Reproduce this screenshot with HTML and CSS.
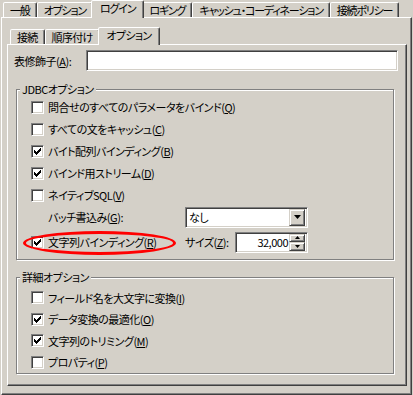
FILE: index.html
```html
<!DOCTYPE html>
<html lang="ja">
<head>
  <meta charset="UTF-8">
  <title>ログイン オプション</title>
  <link rel="stylesheet" href="styles.css">
</head>
<body>
  <div class="dialog">
    <div class="tabs outer-tabs">
      <div class="tab">一般</div>
      <div class="tab">オプション</div>
      <div class="tab active">ログイン</div>
      <div class="tab">ロギング</div>
      <div class="tab">キャッシュ・コーディネーション</div>
      <div class="tab">接続ポリシー</div>
    </div>
    <div class="panel outer-panel">
      <div class="tabs inner-tabs">
        <div class="tab">接続</div>
        <div class="tab">順序付け</div>
        <div class="tab active">オプション</div>
      </div>
      <div class="panel inner-panel">
        <div class="field-row">
          <span class="field-label">表修飾子(<u>A</u>):</span>
          <div class="textbox"></div>
        </div>

        <fieldset class="group group-jdbc">
          <legend>JDBCオプション</legend>
          <div class="check-row"><span class="check"></span>問合せのすべてのパラメータをバインド(<u>Q</u>)</div>
          <div class="check-row"><span class="check"></span>すべての文をキャッシュ(<u>C</u>)</div>
          <div class="check-row"><span class="check"><svg width="7" height="7" viewBox="0 0 7 7"><path d="M0 2h1v3H0zM1 3h1v3H1zM2 4h1v3H2zM3 3h1v3H3zM4 2h1v3H4zM5 1h1v3H5zM6 0h1v3H6z"/></svg></span>バイト配列バインディング(<u>B</u>)</div>
          <div class="check-row"><span class="check"><svg width="7" height="7" viewBox="0 0 7 7"><path d="M0 2h1v3H0zM1 3h1v3H1zM2 4h1v3H2zM3 3h1v3H3zM4 2h1v3H4zM5 1h1v3H5zM6 0h1v3H6z"/></svg></span>バインド用ストリーム(<u>D</u>)</div>
          <div class="check-row"><span class="check"></span>ネイティブSQL(<u>V</u>)</div>

          <div class="batch-row">
            <span class="batch-label">バッチ書込み(<u>G</u>):</span>
            <div class="combo">
              <span class="combo-text">なし</span>
              <span class="btn combo-btn"><svg width="7" height="4" viewBox="0 0 7 4"><path d="M0 0h7L3.5 4z"/></svg></span>
            </div>
          </div>

          <div class="string-row">
            <div class="check-row string-check">
              <span class="check"><svg width="7" height="7" viewBox="0 0 7 7"><path d="M0 2h1v3H0zM1 3h1v3H1zM2 4h1v3H2zM3 3h1v3H3zM4 2h1v3H4zM5 1h1v3H5zM6 0h1v3H6z"/></svg></span>文字列バインディング(<u>R</u>)
              <span class="mark"></span>
            </div>
            <span class="size-label">サイズ(<u>Z</u>):</span>
            <div class="spinner">
              <span class="spin-text">32,000</span>
              <span class="spin-btns">
                <span class="btn spin-btn"><svg width="5" height="3" viewBox="0 0 5 3"><path d="M2.5 0L5 3H0z"/></svg></span>
                <span class="btn spin-btn"><svg width="5" height="3" viewBox="0 0 5 3"><path d="M0 0h5L2.5 3z"/></svg></span>
              </span>
            </div>
          </div>
        </fieldset>

        <fieldset class="group group-detail">
          <legend>詳細オプション</legend>
          <div class="check-row"><span class="check"></span>フィールド名を大文字に変換(<u>I</u>)</div>
          <div class="check-row"><span class="check"><svg width="7" height="7" viewBox="0 0 7 7"><path d="M0 2h1v3H0zM1 3h1v3H1zM2 4h1v3H2zM3 3h1v3H3zM4 2h1v3H4zM5 1h1v3H5zM6 0h1v3H6z"/></svg></span>データ変換の最適化(<u>O</u>)</div>
          <div class="check-row"><span class="check"><svg width="7" height="7" viewBox="0 0 7 7"><path d="M0 2h1v3H0zM1 3h1v3H1zM2 4h1v3H2zM3 3h1v3H3zM4 2h1v3H4zM5 1h1v3H5zM6 0h1v3H6z"/></svg></span>文字列のトリミング(<u>M</u>)</div>
          <div class="check-row"><span class="check"></span>プロパティ(<u>P</u>)</div>
        </fieldset>
      </div>
    </div>
  </div>
</body>
</html>
```

FILE: styles.css
```css
body {
  margin: 0;
  background: #d4d0c8;
  font-family: "Noto Sans CJK JP", "Liberation Sans", sans-serif;
  font-size: 11px;
  font-feature-settings: "palt";
  letter-spacing: -0.5px;
  color: #000;
  overflow: hidden;
}
u {
  text-underline-offset: 1px;
}
.dialog {
  width: 411px;
  padding-left: 1px;
}

/* Tab strips */
.tabs {
  display: flex;
  align-items: flex-end;
  height: 17px;
  padding-left: 2px;
  position: relative;
  z-index: 1;
}
.tab {
  height: 15px;
  line-height: 14px;
  padding: 0 6px;
  border: 1px solid;
  border-bottom: none;
  border-color: #fff #404040 transparent #fff;
  border-radius: 2px 2px 0 0;
  box-shadow: inset -1px 0 #808080;
  background: #d4d0c8;
  white-space: nowrap;
  box-sizing: border-box;
  letter-spacing: -0.7px;
}
.outer-tabs .tab {
  letter-spacing: -1.2px;
}
.tab.active {
  height: 18px;
  line-height: 15px;
  margin: 0 -2px -1px;
  padding: 0 8px;
  position: relative;
  z-index: 2;
}

/* Panels */
.panel {
  border: 1px solid;
  border-color: #fff #404040 #404040 #fff;
  box-shadow: inset -1px -1px #808080;
  box-sizing: border-box;
}
.outer-panel {
  height: 378px;
  padding: 9px 4px 7px 5px;
}
.inner-tabs {
  padding-left: 3px;
}
.inner-panel {
  height: 342px;
  padding: 5px 0 0 0;
}

/* Sunken field */
.textbox,
.combo,
.spinner {
  border: 1px solid;
  border-color: #808080 #fff #fff #808080;
  box-shadow: inset 1px 1px #404040, inset -1px -1px #d4d0c8;
  background: #fff;
  box-sizing: border-box;
}
.field-row {
  display: flex;
  align-items: center;
  height: 21px;
  padding-left: 6px;
}
.field-label {
  width: 72px;
}
.textbox {
  width: 312px;
  height: 21px;
}

/* Group boxes */
.group {
  width: 378px;
  margin: 11px 0 0 8px;
  padding: 0 0 5px 14px;
  border: 1px solid #808080;
  box-shadow: inset 1px 1px #fff, 1px 1px #fff;
  box-sizing: border-box;
  min-width: 0;
}
.group legend {
  margin-left: -11px;
  padding: 0 2px;
  line-height: 14px;
  background: #d4d0c8;
}
.group-detail {
  margin-top: 10px;
  padding-top: 3px;
  padding-bottom: 0;
}
.check-row {
  display: flex;
  align-items: center;
  height: 22px;
  white-space: nowrap;
}
.group-detail .check-row {
  height: 21.5px;
}
.check {
  width: 13px;
  height: 13px;
  margin-right: 4px;
  border: 1px solid;
  border-color: #808080 #fff #fff #808080;
  box-shadow: inset 1px 1px #404040, inset -1px -1px #d4d0c8;
  background: #fff;
  box-sizing: border-box;
  display: flex;
  align-items: center;
  justify-content: center;
  flex-shrink: 0;
}
.check svg {
  display: block;
}

/* Batch write combo */
.batch-row {
  display: flex;
  align-items: center;
  height: 22px;
}
.batch-label {
  width: 154px;
  padding-left: 17px;
  box-sizing: border-box;
}
.combo {
  width: 123px;
  height: 21px;
  display: flex;
  align-items: center;
  justify-content: space-between;
  padding: 2px;
}
.combo-text {
  padding-left: 1px;
}
.btn {
  background: #d4d0c8;
  border: 1px solid;
  border-color: #d4d0c8 #404040 #404040 #d4d0c8;
  box-shadow: inset 1px 1px #fff, inset -1px -1px #808080;
  box-sizing: border-box;
  display: flex;
  align-items: center;
  justify-content: center;
}
.combo-btn {
  width: 16px;
  height: 17px;
}

/* String binding row */
.string-row {
  display: flex;
  align-items: center;
  height: 24px;
  margin-top: 2px;
}
.string-check {
  width: 154px;
  position: relative;
}
.mark {
  position: absolute;
  left: -8px;
  top: 0;
  width: 153px;
  height: 24px;
  border: 3px solid #f00;
  border-radius: 50%;
  box-sizing: border-box;
}
.size-label {
  width: 50px;
  white-space: nowrap;
}
.spinner {
  width: 73px;
  height: 21px;
  display: flex;
  align-items: center;
  padding: 2px;
}
.spin-text {
  flex: 1;
  text-align: right;
  padding-right: 1px;
}
.spin-btns {
  display: flex;
  flex-direction: column;
  width: 16px;
  height: 17px;
}
.spin-btn {
  flex: 1;
}
.spin-btn svg {
  display: block;
}
```
